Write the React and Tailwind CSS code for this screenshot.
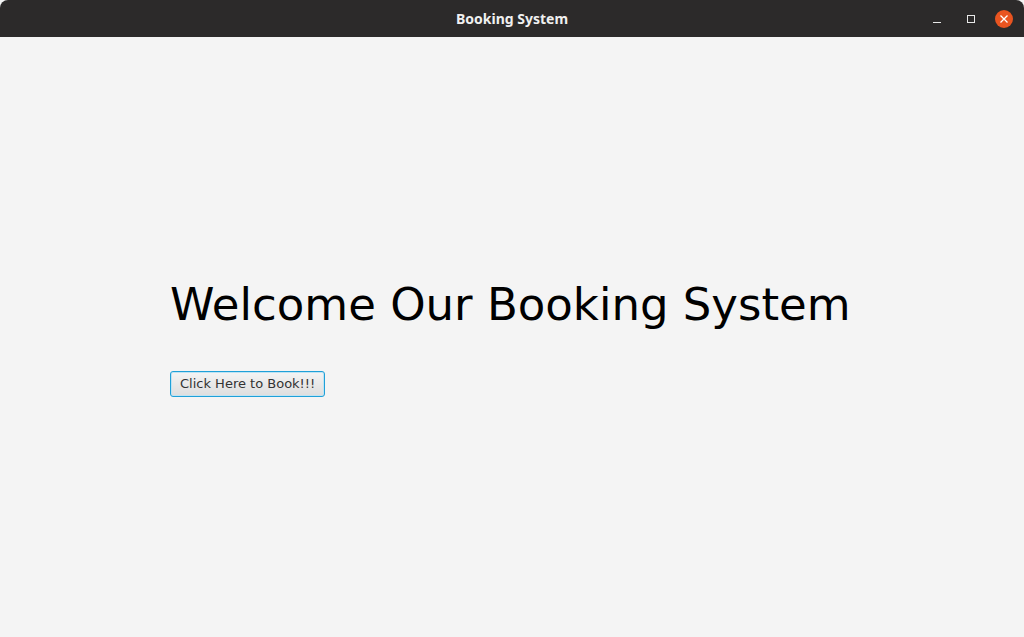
export default function App() {
  return (
    <div className="w-[1024px] h-[637px] flex flex-col bg-[#f4f4f4] overflow-hidden">
      {/* Title bar */}
      <div className="h-[37px] shrink-0 bg-[#2c2a2a] rounded-t-[8px] relative flex items-center justify-center">
        <span className="text-[14px] font-bold text-[#f0f0f0] font-['Noto_Sans','DejaVu_Sans',sans-serif]">
          Booking System
        </span>
        <div className="absolute right-[11px] top-0 h-full flex items-center">
          <div className="w-[34px] h-full flex items-center justify-center">
            <div className="w-[8px] h-[1.5px] bg-[#e8e8e8] mt-[8px]" />
          </div>
          <div className="w-[34px] h-full flex items-center justify-center">
            <div className="w-[8px] h-[8px] border border-[#e8e8e8]" />
          </div>
          <div className="w-[18px] h-[18px] ml-[7px] rounded-full bg-[#e95420] flex items-center justify-center">
            <svg width="10" height="10" viewBox="0 0 10 10">
              <path d="M1.5 1.5 L8.5 8.5 M8.5 1.5 L1.5 8.5" stroke="#fff" strokeWidth="1.3" />
            </svg>
          </div>
        </div>
      </div>

      {/* Content */}
      <div className="flex-1 flex flex-col pl-[170px] pt-[239px] font-['DejaVu_Sans',sans-serif]">
        <h1 className="text-[45px] leading-[58px] text-black">Welcome Our Booking System</h1>
        <div className="mt-[37px]">
          <button className="h-[26px] px-[9px] rounded-[3px] border border-[#1fa0d8] bg-gradient-to-b from-[#f4f4f4] to-[#dedede] text-[13px] text-[#333] shadow-[inset_0_0_0_1px_#bfe3f3]">
            Click Here to Book!!!
          </button>
        </div>
      </div>
    </div>
  )
}
